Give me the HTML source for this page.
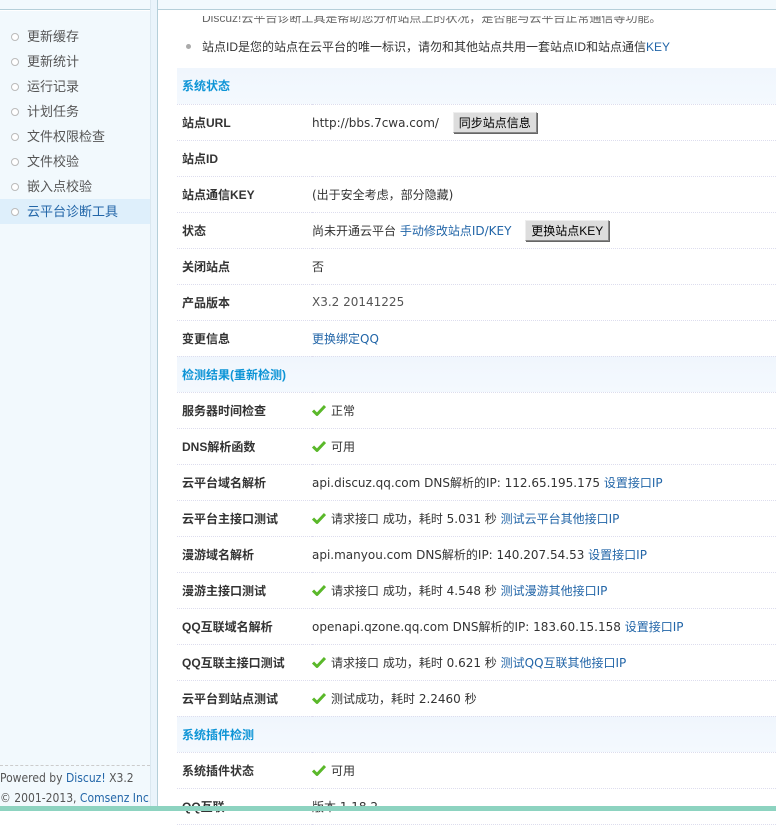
<!DOCTYPE html>
<html><head><meta charset="utf-8"><style>
*{margin:0;padding:0;box-sizing:border-box}
body{width:776px;height:811px;overflow:hidden;background:#fff;font:12px "Liberation Sans","Noto Sans CJK SC",sans-serif;color:#333;position:relative}
#top{position:absolute;left:0;top:0;width:776px;height:10px;background:#f2f9fd;border-bottom:1px solid #b5cfd9}
#side{position:absolute;left:0;top:11px;width:150px;height:800px;background:#f2f9fd}
#sep{position:absolute;left:150px;top:0;width:8px;height:811px;background:#eaf4fb;border-left:1px solid #dbe8f0;border-right:1px solid #b5cfd9}
#side ul{list-style:none;margin-top:13px}
#side li{height:25px;line-height:25px;padding-left:27px;position:relative;color:#555;font-size:13px}
#side li:before{content:"";position:absolute;left:11px;top:9px;width:6px;height:6px;border:1px solid #bbb;border-radius:50%;background:#fff}
#side li.on{background:#deeffb;color:#2366a8}
#foot{position:absolute;left:0;top:754px;width:150px;border-top:1px dashed #ccc;font-size:12px;color:#555;line-height:20px;padding-top:2px;white-space:nowrap;font-family:"DejaVu Sans Condensed","DejaVu Sans",sans-serif}
#foot a{color:#2366a8}
#main{position:absolute;left:177px;top:0;width:599px}
.tip{position:absolute;left:186px;font-size:12px;white-space:nowrap}
table{border-collapse:collapse;width:599px;position:absolute;top:68px;left:0}
td{height:36px;border-bottom:1px dotted #dde;vertical-align:middle;font-size:12px}
td.v{font-family:"DejaVu Sans","Noto Sans CJK SC",sans-serif;font-size:12px}
td.l{width:135px;padding-left:5px;font-weight:bold;color:#333}
tr.h td{background:linear-gradient(#f0f6fd,#f4f9fe);color:#0d94d6;font-weight:bold;padding-left:5px}
a{color:#2366a8;text-decoration:none}
.n{color:#555}
.ck{display:inline-block;width:14px;height:12px;vertical-align:-1px;margin-right:5px}
button{font:12px "Liberation Sans","Noto Sans CJK SC",sans-serif;background:#ddd;border:1px solid #888;border-top-color:#eee;border-left-color:#eee;padding:1px 5px;margin-left:10px;box-shadow:1px 1px 0 #666}
#green{position:absolute;left:0;top:806px;width:776px;height:5px;background:#8dd3c0}
</style></head><body>
<div id="top"></div>
<div id="side"><ul>
<li>更新缓存</li><li>更新统计</li><li>运行记录</li><li>计划任务</li><li>文件权限检查</li><li>文件校验</li><li>嵌入点校验</li><li class="on">云平台诊断工具</li></ul>
<div id="foot">Powered by <a>Discuz!</a> X3.2<br>© 2001-2013, <a>Comsenz Inc.</a></div></div>
<div id="sep"></div>
<div class="tip" style="top:9px;color:#666;clip-path:inset(7px 0 0 0);left:202px">Discuz!云平台诊断工具是帮助您分析站点上的状况，是否能与云平台正常通信等功能。</div>
<div class="tip" style="top:38px;left:186px;padding-left:16px"><span style="position:absolute;left:0;top:6px;width:5px;height:5px;border-radius:50%;background:#aaa"></span>站点ID是您的站点在云平台的唯一标识，请勿和其他站点共用一套站点ID和站点通信<a>KEY</a></div>
<svg width="0" height="0" style="position:absolute"><defs><symbol id="c" viewBox="0 0 14 12"><path d="M1 6.5 L5 10.5 L13 2" stroke="#5ab82a" stroke-width="3" fill="none" stroke-linejoin="round"/></symbol></defs></svg>
<div id="main"><table>
<tr class="h"><td colspan="2">系统状态</td></tr>
<tr><td class="l">站点URL</td><td class="v">http://bbs.7cwa.com/ <button>同步站点信息</button></td></tr>
<tr><td class="l">站点ID</td><td></td></tr>
<tr><td class="l">站点通信KEY</td><td class="v">(出于安全考虑，部分隐藏)</td></tr>
<tr><td class="l">状态</td><td class="v">尚未开通云平台 <a>手动修改站点ID/KEY</a> <button>更换站点KEY</button></td></tr>
<tr><td class="l">关闭站点</td><td class="v">否</td></tr>
<tr><td class="l">产品版本</td><td class="v n">X3.2 20141225</td></tr>
<tr><td class="l">变更信息</td><td class="v"><a>更换绑定QQ</a></td></tr>
<tr class="h"><td colspan="2">检测结果(重新检测)</td></tr>
<tr><td class="l">服务器时间检查</td><td class="v"><svg class="ck"><use href="#c"/></svg>正常</td></tr>
<tr><td class="l">DNS解析函数</td><td class="v"><svg class="ck"><use href="#c"/></svg>可用</td></tr>
<tr><td class="l">云平台域名解析</td><td class="v">api.discuz.qq.com DNS解析的IP: 112.65.195.175 <a>设置接口IP</a></td></tr>
<tr><td class="l">云平台主接口测试</td><td class="v"><svg class="ck"><use href="#c"/></svg>请求接口 成功，耗时 5.031 秒 <a>测试云平台其他接口IP</a></td></tr>
<tr><td class="l">漫游域名解析</td><td class="v">api.manyou.com DNS解析的IP: 140.207.54.53 <a>设置接口IP</a></td></tr>
<tr><td class="l">漫游主接口测试</td><td class="v"><svg class="ck"><use href="#c"/></svg>请求接口 成功，耗时 4.548 秒 <a>测试漫游其他接口IP</a></td></tr>
<tr><td class="l">QQ互联域名解析</td><td class="v">openapi.qzone.qq.com DNS解析的IP: 183.60.15.158 <a>设置接口IP</a></td></tr>
<tr><td class="l">QQ互联主接口测试</td><td class="v"><svg class="ck"><use href="#c"/></svg>请求接口 成功，耗时 0.621 秒 <a>测试QQ互联其他接口IP</a></td></tr>
<tr><td class="l">云平台到站点测试</td><td class="v"><svg class="ck"><use href="#c"/></svg>测试成功，耗时 2.2460 秒</td></tr>
<tr class="h"><td colspan="2">系统插件检测</td></tr>
<tr><td class="l">系统插件状态</td><td class="v"><svg class="ck"><use href="#c"/></svg>可用</td></tr>
<tr><td class="l">QQ互联</td><td class="v">版本 1.18.2</td></tr>
</table></div>
<div id="green"></div>
</body></html>
